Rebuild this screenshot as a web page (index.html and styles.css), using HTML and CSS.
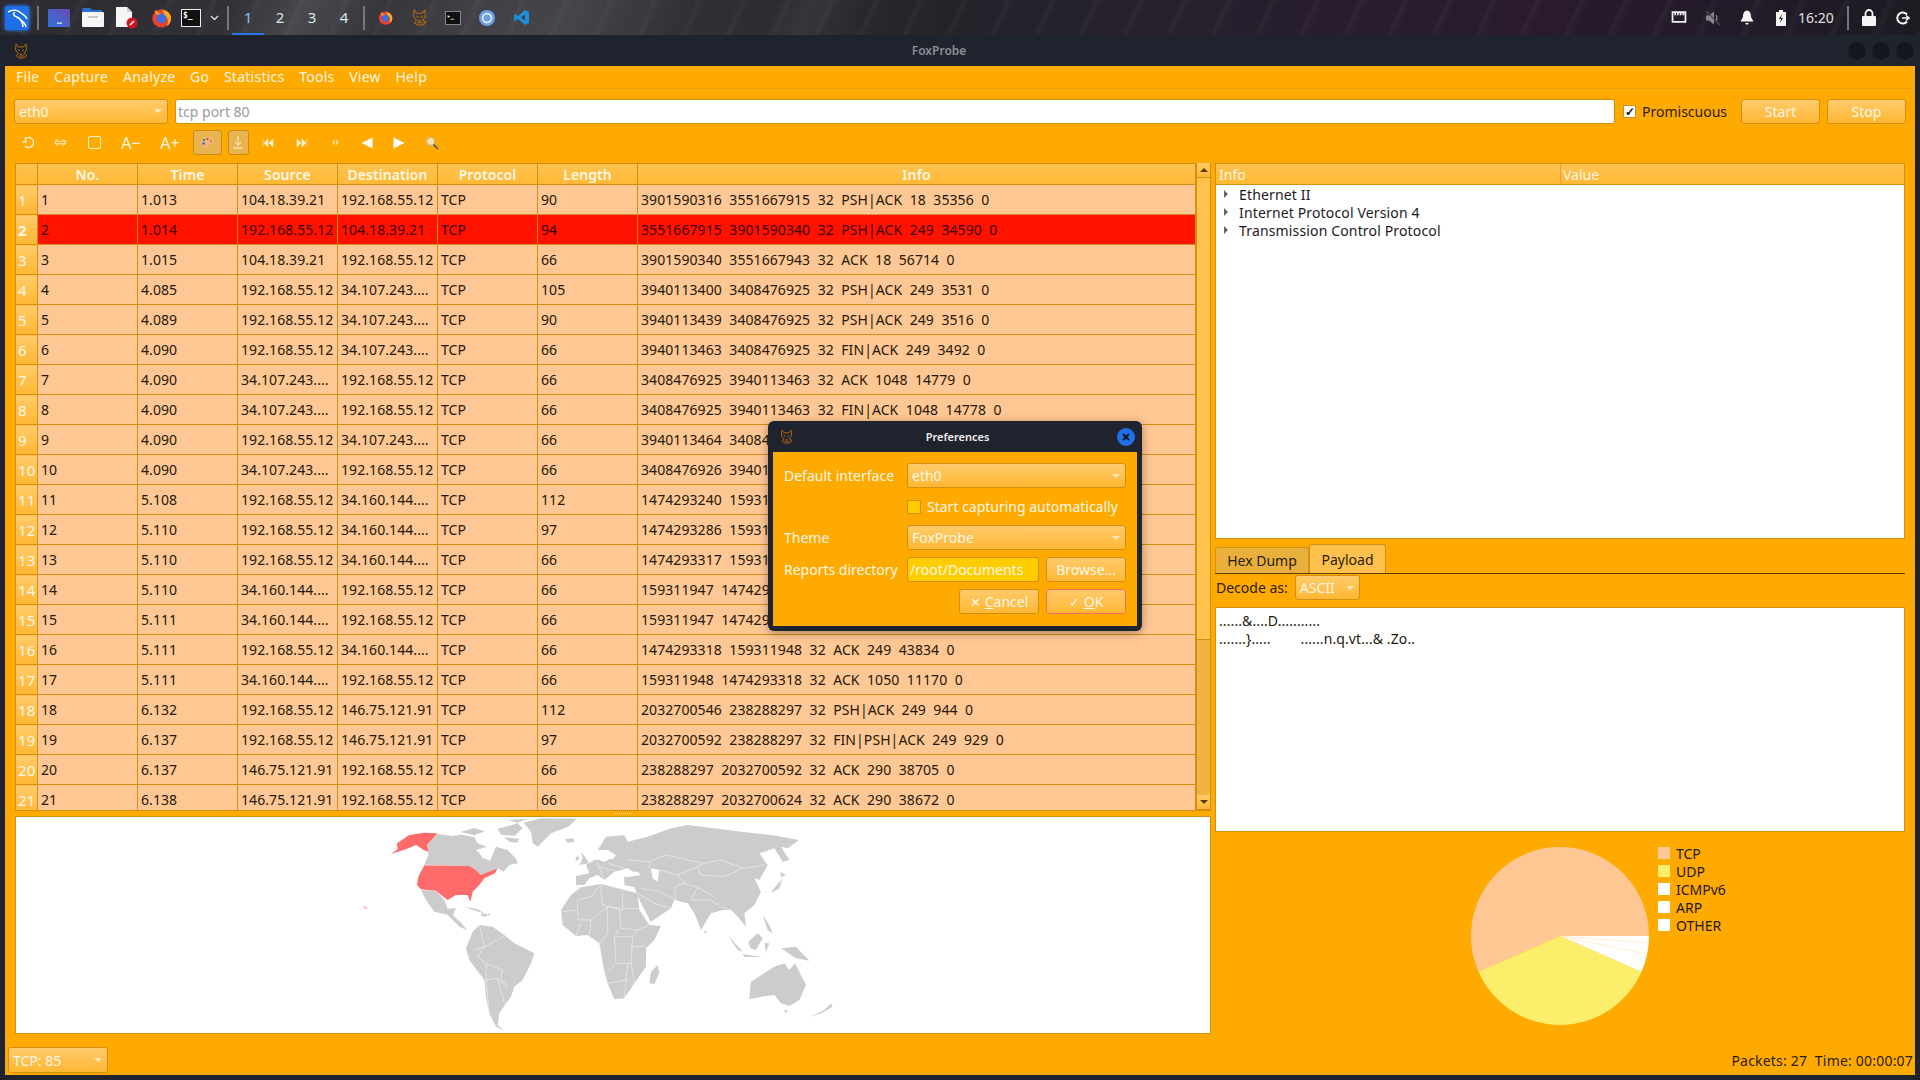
FILE: index.html
```html
<!DOCTYPE html>
<html lang="en">
<head>
    <meta charset="UTF-8">
    <title>FoxProbe</title>
    <link rel="stylesheet" href="styles.css">
</head>
<body>
    <svg class="defs" width="0" height="0">
        <symbol id="fox" viewBox="0 0 14 16">
            <path d="M2 1 L4.5 4 H9.5 L12 1 L12.5 7 L10 10.5 L13 12.5 L10 15 H5 L2.5 13 L4 10.5 L1.5 7 Z M4 6.5 L6 8 M10 6.5 L8 8 M5.5 10.5 L7 12 L8.5 10.5 M5 13 H10" fill="none" stroke="#b5690c" stroke-width="1"/>
        </symbol>
        <symbol id="firefox" viewBox="0 0 24 24">
            <circle cx="12" cy="13" r="10.5" fill="#e8412f"/>
            <path d="M12 3 C18 3 23 7 23 13 C23 17 21 20 18 22 C21 17 19 10 14 8 C15 6 14 4 12 3 Z" fill="#ffa61a"/>
            <path d="M5 3 C4 6 5 8 7 9 L12 7 C9 7 7 5 5 3 Z" fill="#ff9a26"/>
            <circle cx="12" cy="13" r="5.5" fill="#3a6fe0"/>
        </symbol>
    </svg>

    <div class="panel">
        <div class="p-cell">
            <svg class="kali" width="24" height="24" viewBox="0 0 24 24">
                <rect width="24" height="24" rx="2" fill="#1f6fe8"/>
                <path d="M3 6 C8 3 13 4 16 7 C19 9 21 10 22 13 M10 6 C7 8 9 10 12 11 C16 13 18 16 18 21 M15 14 C17 15 20 16 21 21" fill="none" stroke="#fff" stroke-width="1.5"/>
            </svg>
        </div>
        <div class="p-sep"></div>
        <div class="p-cell">
            <svg width="22" height="18" viewBox="0 0 22 18">
                <defs><linearGradient id="desk" x1="0" y1="1" x2="1" y2="0"><stop offset="0" stop-color="#2f72e0"/><stop offset="1" stop-color="#6a4bb0"/></linearGradient></defs>
                <rect width="22" height="18" rx="1" fill="url(#desk)"/>
                <rect x="9" y="13.5" width="5" height="1.4" fill="#dde"/>
            </svg>
        </div>
        <div class="p-cell">
            <svg width="22" height="19" viewBox="0 0 22 19">
                <path d="M0 2 Q0 0 2 0 H8 L10 2 H20 V6 H0 Z" fill="#2a6fd8"/>
                <rect y="4" width="22" height="15" rx="1" fill="#f6f6f6"/>
                <rect x="6" y="8" width="10" height="2" fill="#c9c9c9"/>
            </svg>
        </div>
        <div class="p-cell">
            <svg width="22" height="22" viewBox="0 0 22 22">
                <path d="M0 0 H11 L16 5 V20 H0 Z" fill="#f6f6f6"/>
                <path d="M11 0 L16 5 H11 Z" fill="#cfcfcf"/>
                <circle cx="16" cy="16" r="5.5" fill="#d01420"/>
                <path d="M14 18 L18 14" stroke="#fff" stroke-width="1.6"/>
            </svg>
        </div>
        <div class="p-cell"><svg width="21" height="21"><use href="#firefox"/></svg></div>
        <div class="p-cell cell-term">
            <div class="term">$_</div>
        </div>
        <div class="p-cell cell-chev">
            <svg width="9" height="6" viewBox="0 0 9 6"><path d="M1 1 L4.5 4.5 L8 1" fill="none" stroke="#ddd" stroke-width="1.4"/></svg>
        </div>
        <div class="p-sep"></div>
        <div class="ws ws-on">1</div>
        <div class="ws">2</div>
        <div class="ws">3</div>
        <div class="ws">4</div>
        <div class="p-sep"></div>
        <div class="p-cell"><svg width="15" height="15"><use href="#firefox"/></svg></div>
        <div class="p-cell"><svg width="15" height="17"><use href="#fox"/></svg></div>
        <div class="p-cell">
            <div class="term term-small">▸_</div>
        </div>
        <div class="p-cell">
            <svg width="16" height="16" viewBox="0 0 16 16"><circle cx="8" cy="8" r="8" fill="#6f9ee8"/><circle cx="8" cy="8" r="4.4" fill="none" stroke="#e4eefb" stroke-width="1.6"/></svg>
        </div>
        <div class="p-cell">
            <svg width="15" height="15" viewBox="0 0 15 15"><path d="M11 0 L15 2 V13 L11 15 L4 9 L1.5 11 L0 10 V5 L1.5 4 L4 6 Z M11 4.5 L7 7.5 L11 10.5 Z" fill="#1b8fd8" fill-rule="evenodd"/></svg>
        </div>
        <div class="tray">
            <div class="p-cell">
                <svg width="16" height="14" viewBox="0 0 14 13"><path d="M1 1 H13 V10 H1 Z M3.5 1 V4 M6 1 V4 M8.500 1 V4 M11 1 V4" fill="none" stroke="#f2f2f2" stroke-width="1.6"/></svg>
            </div>
            <div class="p-cell">
                <svg width="16" height="16" viewBox="0 0 16 16"><path d="M1 5.500 H4 L9 1.500 V14.500 L4 10.500 H1 Z" fill="#8a8790"/><path d="M11 5 Q13 8 11 11" fill="none" stroke="#8a8790" stroke-width="1.200"/><path d="M1 1 L15 15" stroke="#4d4a50" stroke-width="1.4"/></svg>
            </div>
            <div class="p-cell">
                <svg width="14" height="16" viewBox="0 0 14 16"><path d="M7 0.500 C10 1 11 3.500 11 7 L13.500 11.500 H0.500 L3 7 C3 3.500 4 1 7 0.500 Z M5 13 H9 L7 15 Z" fill="#f5f5f5"/></svg>
            </div>
            <div class="p-cell">
                <svg width="10" height="16" viewBox="0 0 10 16"><path d="M3 0 H7 V2 H10 V16 H0 V2 H3 Z" fill="#f5f5f5"/><path d="M6 4 L3 9 H5 L4 13 L7 8 H5 Z" fill="#222"/></svg>
            </div>
            <div class="clock">16:20</div>
            <div class="p-sep"></div>
            <div class="p-cell">
                <svg width="14" height="17" viewBox="0 0 14 17"><path d="M3.500 7 V4.500 A3.500 3.500 0 0 1 10.500 4.500 V7" fill="none" stroke="#f5f5f5" stroke-width="1.8"/><rect y="7" width="14" height="10" rx="1" fill="#f5f5f5"/></svg>
            </div>
            <div class="p-cell">
                <svg width="14" height="14" viewBox="0 0 14 14"><path d="M11 3.500 A5.500 5.500 0 1 0 11 10.500" fill="none" stroke="#f5f5f5" stroke-width="2"/><path d="M6 7 H13 M10 4.500 L13 7 L10 9.500" fill="none" stroke="#f5f5f5" stroke-width="1.600"/></svg>
            </div>
        </div>
    </div>

    <div class="window">
        <div class="titlebar">
            <svg class="title-icon" width="14" height="16"><use href="#fox"/></svg>
            <div class="title-text">FoxProbe</div>
            <div class="title-btns">
                <span class="dot"></span>
                <span class="dot"></span>
                <span class="dot"></span>
            </div>
        </div>

        <div class="app">
            <div class="menubar">
                <span>File</span>
                <span>Capture</span>
                <span>Analyze</span>
                <span>Go</span>
                <span>Statistics</span>
                <span>Tools</span>
                <span>View</span>
                <span>Help</span>
            </div>

            <div class="filterbar">
                <div class="combo combo-iface">eth0</div>
                <div class="filter-input">tcp port 80</div>
                <label class="promisc"><span class="check">✓</span>Promiscuous</label>
                <div class="btn btn-run">Start</div>
                <div class="btn btn-run">Stop</div>
            </div>

            <div class="toolbar">
                <div class="tool"><svg width="13" height="13" viewBox="0 0 13 13"><path d="M3 3 A5 5 0 1 1 3 10" fill="none" stroke="#fff3d6" stroke-width="1.300"/><path d="M0.500 6 H5 M3.500 1 V5" stroke="#fff3d6" stroke-width="1.300"/></svg></div>
                <div class="tool"><svg width="13" height="9" viewBox="0 0 13 9"><path d="M4 1 L1 4.500 L4 8 M9 1 L12 4.500 L9 8 M1 3.200 H12 M1 5.800 H12" fill="none" stroke="#fff3d6" stroke-width="1"/></svg></div>
                <div class="tool"><span class="tool-square"></span></div>
                <div class="tool tool-text">A−</div>
                <div class="tool tool-text">A+</div>
                <div class="tool">
                    <div class="tool-on tool-on-wide">
                        <svg width="15" height="13" viewBox="0 0 15 13"><path d="M7 0.500 C12 0.500 15 4 14 7 C13 9 10 7 9 9 C8 11 7 12.500 5 12 C1 11 0 8 1 5 C1.500 2.500 4 0.500 7 0.500 Z" fill="#f0b47c"/><circle cx="4" cy="4" r="1.200" fill="#3a8f4a"/><circle cx="7.500" cy="3" r="1.100" fill="#d8352a"/><circle cx="3.500" cy="7.500" r="1.200" fill="#3366cc"/><circle cx="11" cy="5" r="1" fill="#c63"/></svg>
                    </div>
                </div>
                <div class="tool">
                    <div class="tool-on">
                        <svg width="10" height="13" viewBox="0 0 10 13"><path d="M5 0 V9 M2 6 L5 9.500 L8 6 M0 12 H10" fill="none" stroke="#fff3d6" stroke-width="1"/></svg>
                    </div>
                </div>
                <div class="tool"><svg width="12" height="8" viewBox="0 0 12 8"><path d="M1 0 V8 M6 0 L2 4 L6 8 Z M11 0 L7 4 L11 8 Z" fill="#fff3d6" stroke="#fff3d6" stroke-width=".5"/></svg></div>
                <div class="tool"><svg width="12" height="8" viewBox="0 0 12 8"><path d="M11 0 V8 M1 0 L5 4 L1 8 Z M6 0 L10 4 L6 8 Z" fill="#fff3d6" stroke="#fff3d6" stroke-width=".5"/></svg></div>
                <div class="tool"><svg width="7" height="9" viewBox="0 0 7 9"><path d="M3.500 0 L7 4.500 L3.500 9 L0 4.500 Z" fill="#ffd277"/><path d="M3.500 0 V9" stroke="#ffaa00"/></svg></div>
                <div class="tool"><svg width="12" height="12" viewBox="0 0 12 12"><path d="M11.500 0.500 V11.500 L0.500 6 Z" fill="#fff"/></svg></div>
                <div class="tool"><svg width="12" height="12" viewBox="0 0 12 12"><path d="M0.500 0.500 V11.500 L11.500 6 Z" fill="#fff"/></svg></div>
                <div class="tool"><svg width="14" height="14" viewBox="0 0 14 14"><circle cx="5.500" cy="5.500" r="4" fill="#ffe0a8" stroke="#c9b68a" stroke-width="1.400"/><path d="M8.500 8.500 L13 13" stroke="#6f6a55" stroke-width="2"/></svg></div>
            </div>

            <div class="main">
                <div class="left">
                    <div class="packets">
                        <div class="table-wrap">
                            <table class="packet-table">
                                <thead>
                                    <tr><th class="corner"></th><th>No.</th><th>Time</th><th>Source</th><th>Destination</th><th>Protocol</th><th>Length</th><th>Info</th></tr>
                                </thead>
                                <tbody>
                                    <tr><th>1</th><td>1</td><td>1.013</td><td>104.18.39.21</td><td>192.168.55.12</td><td>TCP</td><td>90</td><td>3901590316  3551667915  32  PSH|ACK  18  35356  0</td></tr>
                                    <tr class="alert"><th>2</th><td>2</td><td>1.014</td><td>192.168.55.12</td><td>104.18.39.21</td><td>TCP</td><td>94</td><td>3551667915  3901590340  32  PSH|ACK  249  34590  0</td></tr>
                                    <tr><th>3</th><td>3</td><td>1.015</td><td>104.18.39.21</td><td>192.168.55.12</td><td>TCP</td><td>66</td><td>3901590340  3551667943  32  ACK  18  56714  0</td></tr>
                                    <tr><th>4</th><td>4</td><td>4.085</td><td>192.168.55.12</td><td>34.107.243....</td><td>TCP</td><td>105</td><td>3940113400  3408476925  32  PSH|ACK  249  3531  0</td></tr>
                                    <tr><th>5</th><td>5</td><td>4.089</td><td>192.168.55.12</td><td>34.107.243....</td><td>TCP</td><td>90</td><td>3940113439  3408476925  32  PSH|ACK  249  3516  0</td></tr>
                                    <tr><th>6</th><td>6</td><td>4.090</td><td>192.168.55.12</td><td>34.107.243....</td><td>TCP</td><td>66</td><td>3940113463  3408476925  32  FIN|ACK  249  3492  0</td></tr>
                                    <tr><th>7</th><td>7</td><td>4.090</td><td>34.107.243....</td><td>192.168.55.12</td><td>TCP</td><td>66</td><td>3408476925  3940113463  32  ACK  1048  14779  0</td></tr>
                                    <tr><th>8</th><td>8</td><td>4.090</td><td>34.107.243....</td><td>192.168.55.12</td><td>TCP</td><td>66</td><td>3408476925  3940113463  32  FIN|ACK  1048  14778  0</td></tr>
                                    <tr><th>9</th><td>9</td><td>4.090</td><td>192.168.55.12</td><td>34.107.243....</td><td>TCP</td><td>66</td><td>3940113464  34084</td></tr>
                                    <tr><th>10</th><td>10</td><td>4.090</td><td>34.107.243....</td><td>192.168.55.12</td><td>TCP</td><td>66</td><td>3408476926  39401</td></tr>
                                    <tr><th>11</th><td>11</td><td>5.108</td><td>192.168.55.12</td><td>34.160.144....</td><td>TCP</td><td>112</td><td>1474293240  159311</td></tr>
                                    <tr><th>12</th><td>12</td><td>5.110</td><td>192.168.55.12</td><td>34.160.144....</td><td>TCP</td><td>97</td><td>1474293286  159311</td></tr>
                                    <tr><th>13</th><td>13</td><td>5.110</td><td>192.168.55.12</td><td>34.160.144....</td><td>TCP</td><td>66</td><td>1474293317  159311</td></tr>
                                    <tr><th>14</th><td>14</td><td>5.110</td><td>34.160.144....</td><td>192.168.55.12</td><td>TCP</td><td>66</td><td>159311947  1474293</td></tr>
                                    <tr><th>15</th><td>15</td><td>5.111</td><td>34.160.144....</td><td>192.168.55.12</td><td>TCP</td><td>66</td><td>159311947  1474293</td></tr>
                                    <tr><th>16</th><td>16</td><td>5.111</td><td>192.168.55.12</td><td>34.160.144....</td><td>TCP</td><td>66</td><td>1474293318  159311948  32  ACK  249  43834  0</td></tr>
                                    <tr><th>17</th><td>17</td><td>5.111</td><td>34.160.144....</td><td>192.168.55.12</td><td>TCP</td><td>66</td><td>159311948  1474293318  32  ACK  1050  11170  0</td></tr>
                                    <tr><th>18</th><td>18</td><td>6.132</td><td>192.168.55.12</td><td>146.75.121.91</td><td>TCP</td><td>112</td><td>2032700546  238288297  32  PSH|ACK  249  944  0</td></tr>
                                    <tr><th>19</th><td>19</td><td>6.137</td><td>192.168.55.12</td><td>146.75.121.91</td><td>TCP</td><td>97</td><td>2032700592  238288297  32  FIN|PSH|ACK  249  929  0</td></tr>
                                    <tr><th>20</th><td>20</td><td>6.137</td><td>146.75.121.91</td><td>192.168.55.12</td><td>TCP</td><td>66</td><td>238288297  2032700592  32  ACK  290  38705  0</td></tr>
                                    <tr><th>21</th><td>21</td><td>6.138</td><td>146.75.121.91</td><td>192.168.55.12</td><td>TCP</td><td>66</td><td>238288297  2032700624  32  ACK  290  38672  0</td></tr>
                                </tbody>
                            </table>
                        </div>
                        <div class="scrollbar">
                            <div class="scroll-btn"><span class="arrow-up"></span></div>
                            <div class="scroll-thumb"></div>
                            <div class="scroll-track"></div>
                            <div class="scroll-btn"><span class="arrow-down"></span></div>
                        </div>
                    </div>
                    <div class="split"></div>
                    <div class="map">
                        <svg class="world" viewBox="15 817 1194 215" width="1194" height="215">
                            <g transform="translate(340 800) scale(.33333)">
                                <g class="land">
                                    <!-- america -->
                                    <path d="M290 102 L335 108 L362 104 L400 112 L410 130 L438 140 L405 150 L432 176 L447 182 L465 140 L500 150 L526 178 L530 190 L505 195 L487 215 L470 205 L440 218 L420 225 L405 210 L385 198 L250 194 L262 165 L258 135 Z"/>
                                    <path d="M358 96 L400 84 L432 94 L400 106 Z M470 86 L530 70 L545 85 L520 108 L480 104 Z M490 112 L535 116 L528 128 L505 125 Z M500 60 L560 56 L530 68 Z"/>
                                    <path d="M548 68 L600 55 L708 56 L682 80 L630 100 L590 140 L575 130 L570 95 Z"/>
                                    <path d="M672 118 L698 115 L700 125 L680 128 Z"/>
                                    <path d="M240 270 L285 272 L310 300 L320 326 L345 325 L335 345 L362 370 L378 390 L355 380 L320 345 L280 335 L255 300 Z"/>
                                    <path d="M370 320 L410 328 L430 340 L395 330 Z M420 340 L440 342 L436 350 L422 348 Z"/>
                                    <path d="M415 375 L455 380 L490 405 L520 430 L580 460 L570 490 L545 540 L520 560 L510 590 L495 610 L475 640 L470 675 L490 692 L465 680 L445 640 L435 590 L430 540 L385 480 L375 445 L395 395 Z"/>
                                    <!-- africa -->
                                    <path d="M720 262 L780 252 L850 270 L890 280 L895 330 L925 375 L960 378 L940 420 L915 445 L915 500 L880 550 L850 595 L820 598 L800 550 L790 515 L775 430 L740 405 L705 408 L665 375 L660 330 L690 285 Z"/>
                                    <path d="M950 495 L955 520 L940 552 L925 550 L930 515 Z"/>
                                    <!-- eurasia -->
                                    <path d="M705 255 L705 228 L745 220 L735 195 L765 178 L790 185 L820 170 L800 150 L770 150 L795 110 L850 105 L860 125 L920 110 L990 85 L1040 75 L1120 85 L1200 95 L1290 105 L1375 120 L1340 145 L1320 140 L1345 180 L1325 185 L1300 145 L1255 160 L1280 195 L1255 240 L1240 235 L1260 275 L1240 315 L1210 340 L1215 380 L1190 350 L1170 330 L1145 330 L1110 340 L1080 390 L1060 340 L1040 310 L1000 300 L990 325 L930 365 L900 310 L880 262 L850 255 L850 230 L890 225 L860 205 L820 215 L790 240 L770 225 L745 235 L730 255 Z"/>
                                    <path d="M720 155 L735 175 L745 190 L715 195 L725 175 Z M705 170 L715 170 L712 182 L703 180 Z"/>
                                    <path d="M1295 270 L1325 235 L1315 265 L1290 280 Z M1318 215 L1335 225 L1320 232 Z"/>
                                    <path d="M1160 405 L1205 455 L1190 450 Z M1222 425 L1250 400 L1265 415 L1245 450 L1228 445 Z M1205 462 L1265 472 L1210 470 Z M1270 430 L1285 430 L1275 455 Z M1320 445 L1365 440 L1405 482 L1365 475 Z M1265 345 L1285 375 L1295 400 L1280 390 Z M1090 390 L1098 398 L1092 402 Z"/>
                                    <!-- oceania -->
                                    <path d="M1230 545 L1300 500 L1330 490 L1345 510 L1362 490 L1395 555 L1375 600 L1345 618 L1320 610 L1300 585 L1260 590 L1225 598 L1228 560 Z"/>
                                    <path d="M1328 630 L1340 630 L1335 640 Z M1405 652 L1450 630 L1470 610 L1475 620 L1440 640 Z"/>
                                </g>
                                <path class="water" d="M930 205 L955 210 L950 245 L935 235 Z M855 232 L900 225 L890 215 L860 215 Z M410 150 L440 145 L445 178 L425 175 Z M800 150 L825 165 L815 178 L795 175 Z"/>
                                <g class="usa">
                                    <path d="M150 162 L170 148 L168 130 L205 105 L250 98 L290 100 L258 135 L262 155 L248 150 L225 135 L195 148 Z"/>
                                    <path d="M250 196 L385 198 L405 210 L420 225 L470 205 L462 220 L430 235 L415 255 L395 275 L388 305 L380 285 L345 285 L320 300 L300 285 L285 272 L240 268 L228 255 L232 230 Z"/>
                                    <path d="M65 316 L72 320 L80 328 L74 326 Z M438 342 L446 342 L445 346 Z"/>
                                </g>
                                <path class="borders" d="M662 335 L710 330 L710 300 L750 290 L778 255 M778 255 L785 315 L845 330 L845 272 M845 325 L895 325 M710 330 L712 360 L750 360 L800 320 L835 325 L840 385 L890 390 L925 375 M705 408 L720 370 M750 360 L745 405 M800 320 L800 400 L775 430 M835 385 L820 410 L875 410 L890 390 M820 410 L825 490 L800 515 M875 410 L870 490 L825 490 M915 440 L870 440 M870 490 L880 550 M800 550 L860 540 M860 490 L850 595"/>
                                <path class="borders" d="M415 375 L430 440 L400 450 M430 440 L470 420 L490 405 M430 440 L410 470 L435 490 L485 510 L480 535 L500 560 M435 490 L435 540 L470 535 L500 565 M435 540 L445 640 M470 535 L490 610"/>
                                <path class="borders" d="M855 180 L925 185 L975 165 L1040 180 L1090 190 L1135 180 L1210 205 L1270 195 M925 185 L925 205 M955 210 L1010 225 L1070 200 L1090 190 M1070 200 L1080 225 L1150 230 L1205 205 M1010 225 L1030 250 L1000 262 L1005 300 M1030 250 L1070 262 L1050 300 L1110 300 L1135 320 L1170 330 M1170 330 L1190 350 M1070 262 L1120 290 M900 265 L955 275 L1005 300 M890 280 L940 310 L990 325 M765 178 L790 240 M800 190 L850 205 M770 200 L830 215"/>
                            </g>
                        </svg>
                    </div>
                </div>

                <div class="right">
                    <div class="tree">
                        <div class="tree-head">
                            <div class="tree-col1">Info</div>
                            <div>Value</div>
                        </div>
                        <div class="tree-body">
                            <div class="tree-row"><span class="tree-arrow"></span>Ethernet II</div>
                            <div class="tree-row"><span class="tree-arrow"></span>Internet Protocol Version 4</div>
                            <div class="tree-row"><span class="tree-arrow"></span>Transmission Control Protocol</div>
                        </div>
                    </div>
                    <div class="tabs">
                        <div class="tab">Hex Dump</div>
                        <div class="tab tab-on">Payload</div>
                    </div>
                    <div class="decode">
                        <span>Decode as:</span>
                        <div class="combo combo-decode">ASCII</div>
                    </div>
                    <div class="payload">
                        <div class="payload-line">......&amp;....D...........</div>
                        <div class="payload-line">.......}.....        ......n.q.vt...&amp; .Zo..</div>
                    </div>
                    <div class="chart">
                        <svg class="pie" width="178" height="178" viewBox="0 0 178 178">
                            <path d="M89 89 L178 89 A89 89 0 1 0 7.500 124.700 Z" fill="#ffc793"/>
                            <path d="M89 89 L7.500 124.700 A89 89 0 0 0 170.500 124.700 Z" fill="#fbee6b"/>
                            <path d="M89 89 L170.500 124.700 A89 89 0 0 0 178 89 Z" fill="#fff"/>
                            <path d="M89 89 L177.500 96 M89 89 L175.500 107" stroke="#ffe9c4" stroke-width=".8"/>
                        </svg>
                        <div class="legend">
                            <div class="legend-row"><span class="swatch swatch-tcp"></span>TCP</div>
                            <div class="legend-row"><span class="swatch swatch-udp"></span>UDP</div>
                            <div class="legend-row"><span class="swatch"></span>ICMPv6</div>
                            <div class="legend-row"><span class="swatch"></span>ARP</div>
                            <div class="legend-row"><span class="swatch"></span>OTHER</div>
                        </div>
                    </div>
                </div>
            </div>

            <div class="statusbar">
                <div class="combo combo-status">TCP: 85</div>
                <div class="status-text">Packets: 27&nbsp; Time: 00:00:07</div>
            </div>
        </div>
    </div>

    <div class="dialog">
        <div class="dialog-title">
            <svg class="dialog-fox" width="13" height="15"><use href="#fox"/></svg>
            <span class="dialog-name">Preferences</span>
            <span class="dialog-close">
                <svg width="8" height="8" viewBox="0 0 8 8"><path d="M1 1 L7 7 M7 1 L1 7" stroke="#10131c" stroke-width="1.800"/></svg>
            </span>
        </div>
        <div class="dialog-body">
            <span class="d-label">Default interface</span>
            <div class="combo">eth0</div>
            <span></span>
            <label class="d-check"><span class="check check-off"></span>Start capturing automatically</label>
            <span class="d-label">Theme</span>
            <div class="combo">FoxProbe</div>
            <span class="d-label d-label-end">Reports directory</span>
            <div class="d-path">
                <div class="path-input">/root/Documents</div>
                <div class="btn btn-browse">Browse…</div>
            </div>
            <span></span>
            <div class="d-actions">
                <div class="btn btn-dialog"><span class="btn-icon">✕</span><span><u>C</u>ancel</span></div>
                <div class="btn btn-dialog btn-default"><span class="btn-icon">✓</span><span><u>O</u>K</span></div>
            </div>
        </div>
    </div>
</body>
</html>
```

FILE: styles.css
```css
html, body {
    margin: 0;
    padding: 0;
    height: 100%;
}

body {
    width: 1920px;
    height: 1080px;
    overflow: hidden;
    position: relative;
    display: flex;
    flex-direction: column;
    font-family: "Noto Sans", sans-serif;
    font-size: 14px;
    color: #2a1c00;
    background-color: #1f232e;
}

.defs {
    position: absolute;
}

/* desktop panel */

.panel {
    height: 35px;
    flex: none;
    display: flex;
    align-items: center;
    color: #e6e6e6;
    background:
        linear-gradient(115deg, transparent 40%, rgba(255, 255, 255, .05) 42%, transparent 45%),
        linear-gradient(115deg, transparent 12%, rgba(255, 255, 255, .1) 16%, transparent 20%, rgba(255, 255, 255, .08) 30%, transparent 36%),
        repeating-linear-gradient(115deg, transparent 0, transparent 30px, rgba(255, 255, 255, .035) 34px, transparent 40px),
        linear-gradient(90deg, #2b2a30 0%, #3a393f 25%, #24232a 50%, #2a1a30 80%, #1c1b22 100%);
}

.p-cell {
    width: 34px;
    height: 34px;
    flex: none;
    display: flex;
    align-items: center;
    justify-content: center;
}

.cell-term {
    width: 26px;
}

.cell-chev {
    width: 20px;
}

.kali {
    filter: drop-shadow(0 0 2px #2f86ff);
}

.p-sep {
    width: 2px;
    height: 24px;
    margin: 0 3px;
    flex: none;
    background-color: #77767c;
}

.term {
    width: 20px;
    height: 18px;
    border: 1px solid #eee;
    background-color: #111;
    color: #fff;
    font-family: "DejaVu Sans Mono", monospace;
    font-size: 8px;
    font-weight: bold;
    line-height: 11px;
    padding-left: 1px;
    box-sizing: border-box;
}

.term-small {
    width: 16px;
    height: 14px;
    border-color: #888;
    font-size: 6px;
    line-height: 8px;
}

.ws {
    width: 32px;
    height: 34px;
    box-sizing: border-box;
    flex: none;
    text-align: center;
    font-size: 15px;
    line-height: 32px;
    color: #dbe6f2;
}

.ws-on {
    border-bottom: 2px solid #2b78e4;
    color: #8fc0f0;
}

.tray {
    margin-left: auto;
    display: flex;
    align-items: center;
}

.clock {
    width: 46px;
    font-size: 14px;
    color: #e0e0e0;
}

/* window */

.window {
    flex: 1;
    display: flex;
    flex-direction: column;
    padding: 0 5px 5px;
    background-color: #1f232e;
    border-radius: 6px 6px 0 0;
    min-height: 0;
}

.titlebar {
    height: 31px;
    flex: none;
    display: flex;
    align-items: center;
    position: relative;
}

.title-icon {
    margin-left: 9px;
}

.title-text {
    flex: 1;
    text-align: center;
    font-size: 12px;
    font-weight: 600;
    color: #8b8e96;
    padding-right: 90px;
    padding-left: 92px;
}

.title-btns {
    display: flex;
    gap: 6px;
    margin-right: 1px;
}

.dot {
    width: 18px;
    height: 18px;
    border-radius: 50%;
    background-color: #14171f;
}

.app {
    flex: 1;
    min-height: 0;
    display: flex;
    flex-direction: column;
    background-color: #ffaa00;
}

.menubar {
    height: 22px;
    box-sizing: content-box;
    flex: none;
    display: flex;
    gap: 14.7px;
    align-items: flex-start;
    line-height: 21px;
    padding-left: 11px;
    letter-spacing: .25px;
    border-bottom: 1px solid #e8a00c;
    color: #fff6e2;
}

.filterbar {
    height: 26px;
    flex: none;
    margin-top: 9px;
    padding: 0 10px 0 9px;
    display: flex;
    align-items: center;
}

.combo {
    height: 25px;
    box-sizing: border-box;
    display: flex;
    align-items: center;
    padding-left: 4px;
    color: #fff8e8;
    border: 1px solid #d28f12;
    border-radius: 3px;
    background: linear-gradient(#ffcb6b, #ffb733);
}

.combo::after {
    content: "";
    margin-left: auto;
    margin-right: 5px;
    border-left: 4px solid transparent;
    border-right: 4px solid transparent;
    border-top: 4px solid #ffe8bb;
}

.combo-iface {
    width: 154px;
    flex: none;
}

.filter-input {
    width: 1440px;
    height: 25px;
    box-sizing: border-box;
    flex: none;
    margin-left: 7px;
    padding-left: 2px;
    line-height: 23px;
    color: #9a9a9a;
    background-color: #fff;
    border: 1px solid #d28f12;
    border-radius: 3px;
}

.promisc {
    width: 118px;
    flex: none;
    display: flex;
    align-items: center;
    margin-left: 8px;
    color: #2a1c00;
}

.check {
    width: 13px;
    height: 13px;
    flex: none;
    margin-right: 6px;
    box-sizing: border-box;
    border: 1px solid #d28f12;
    background-color: #fff;
    color: #111;
    font-size: 12px;
    font-weight: bold;
    line-height: 11px;
    text-align: center;
}

.check-off {
    width: 14px;
    height: 14px;
    background-color: #ffcc00;
}

.btn {
    height: 25px;
    box-sizing: border-box;
    display: flex;
    align-items: center;
    justify-content: center;
    flex: none;
    color: #fff8e8;
    border: 1px solid #d28f12;
    border-radius: 3px;
    background: linear-gradient(#ffcb6b, #ffb733);
}

.btn-run {
    width: 79px;
    margin-right: 7px;
}

.btn-run:last-child {
    margin-right: 0;
}

.toolbar {
    height: 25px;
    flex: none;
    margin-top: 6px;
    padding-left: 7px;
    display: grid;
    grid-template-columns: 32px 32px 36px 38px 40px 35px 26px 34px 34px 32px 31px 33px 34px;
}

.tool {
    display: flex;
    align-items: center;
    justify-content: center;
}

.tool-text {
    font-size: 16px;
    color: #fff6e2;
}

.tool-square {
    width: 11px;
    height: 11px;
    border: 1px solid #fff3d6;
    border-radius: 2px;
}

.tool-on {
    width: 21px;
    height: 25px;
    box-sizing: border-box;
    display: flex;
    align-items: center;
    justify-content: center;
    border: 1px solid #c98a18;
    border-radius: 3px;
    background-color: #e9b34d;
}

.tool-on-wide {
    width: 29px;
}

/* main area */

.main {
    height: 871px;
    flex: none;
    margin-top: 8px;
    padding: 0 10px;
    display: grid;
    grid-template-columns: 1196px 690px;
    column-gap: 4px;
}

.left {
    display: flex;
    flex-direction: column;
    min-height: 0;
}

.packets {
    height: 648px;
    flex: none;
    display: flex;
    border-right: 1px solid #d28f12;
    border-bottom: 1px solid #d28f12;
    box-sizing: border-box;
    overflow: hidden;
}

.table-wrap {
    width: 1181px;
    flex: none;
    overflow: hidden;
}

.packet-table {
    width: 1181px;
    table-layout: fixed;
    border-collapse: collapse;
}

.packet-table th,
.packet-table td {
    height: 30px;
    box-sizing: border-box;
    padding: 0 3px;
    border: 1px solid #d28f12;
    font-weight: normal;
    white-space: pre;
    overflow: hidden;
    text-align: left;
    letter-spacing: .08px;
}

.packet-table td {
    background-color: #ffc793;
    color: #241808;
}

.packet-table thead th {
    height: 21px;
    padding: 0;
    text-align: center;
    font-weight: 600;
    color: #fff8e8;
    background: linear-gradient(#ffc34f, #ffb835);
}

.packet-table thead .corner {
    width: 22px;
}

.packet-table thead th:nth-child(n+2):nth-child(-n+7) {
    width: 100px;
}

.packet-table tbody th {
    font-size: 15px;
    padding: 0 2px;
    color: #fff8e8;
    background: linear-gradient(#ffcb6b, #ffb733);
}

.packet-table .alert td {
    background-color: #ff1200;
    color: #3a0500;
}

.packet-table .alert th {
    font-weight: bold;
}

.scrollbar {
    width: 14px;
    flex: none;
    display: flex;
    flex-direction: column;
    border-left: 1px solid #d28f12;
}

.scroll-btn {
    height: 15px;
    flex: none;
    display: flex;
    align-items: center;
    justify-content: center;
    background: linear-gradient(#ffcb6b, #ffb733);
    border-bottom: 1px solid #d28f12;
    box-sizing: border-box;
}

.arrow-up {
    border-left: 4px solid transparent;
    border-right: 4px solid transparent;
    border-bottom: 4px solid #5a3c00;
}

.arrow-down {
    border-left: 4px solid transparent;
    border-right: 4px solid transparent;
    border-top: 4px solid #5a3c00;
}

.scroll-thumb {
    height: 462px;
    flex: none;
    background-color: #ffc24d;
    border-bottom: 1px solid #d28f12;
    box-sizing: border-box;
}

.scroll-track {
    flex: 1;
    background-color: #f2b440;
}

.split {
    height: 5px;
    flex: none;
    position: relative;
}

.split::before {
    content: "";
    position: absolute;
    left: 600px;
    top: 2px;
    width: 17px;
    border-top: 1px dotted #ffe8bb;
}

.map {
    flex: 1;
    min-height: 0;
    background-color: #fff;
    border: 1px solid #d28f12;
    overflow: hidden;
}

.world {
    display: block;
}

.land path {
    fill: #cccccc;
}

.water {
    fill: #fff;
}

.usa path {
    fill: #ff6b6b;
}

.borders {
    fill: none;
    stroke: #eeeeee;
    stroke-width: 2;
}

/* right side */

.right {
    display: flex;
    flex-direction: column;
    min-height: 0;
}

.tree {
    height: 376px;
    flex: none;
    box-sizing: border-box;
    display: flex;
    flex-direction: column;
    background-color: #fff;
    border: 1px solid #d28f12;
}

.tree-head {
    height: 21px;
    box-sizing: border-box;
    flex: none;
    display: flex;
    align-items: center;
    padding-left: 3px;
    color: #fff8e8;
    border-bottom: 1px solid #d28f12;
    background: linear-gradient(#ffc34f, #ffb835);
}

.tree-col1 {
    width: 341px;
    margin-right: 2px;
    height: 100%;
    line-height: 21px;
    border-right: 1px solid #e9a532;
}

.tree-row {
    height: 18px;
    display: flex;
    align-items: center;
    color: #1b1a1e;
    padding-left: 8px;
    letter-spacing: .15px;
}

.tree-arrow {
    width: 0;
    height: 0;
    margin-right: 11px;
    border-top: 4px solid transparent;
    border-bottom: 4px solid transparent;
    border-left: 4px solid #666;
}

.tabs {
    height: 29px;
    flex: none;
    margin-top: 5px;
    display: flex;
    align-items: flex-end;
    border-bottom: 1px solid #5c3d00;
}

.tab {
    height: 26px;
    box-sizing: border-box;
    padding: 0 8px;
    width: 94px;
    text-align: center;
    line-height: 25px;
    color: #2a1c00;
    background-color: #e9b03d;
    border: 1px solid #d28f12;
    border-bottom: none;
    border-radius: 3px 3px 0 0;
}

.tab-on {
    width: 77px;
    height: 29px;
    line-height: 29px;
    background-color: #ffc14d;
}

.decode {
    height: 25px;
    flex: none;
    margin-top: 1px;
    display: flex;
    align-items: center;
    gap: 7px;
    padding-left: 1px;
}

.combo-decode {
    width: 65px;
    flex: none;
}

.payload {
    height: 225px;
    flex: none;
    margin-top: 7px;
    box-sizing: border-box;
    padding: 4px 3px;
    background-color: #fff;
    border: 1px solid #d28f12;
    line-height: 18px;
    color: #241808;
    letter-spacing: .1px;
}

.payload-line {
    white-space: pre;
}

.chart {
    flex: 1;
    display: flex;
    align-items: flex-start;
    padding: 15px 0 0 256px;
}

.pie {
    flex: none;
}

.legend {
    margin: -3px 0 0 9px;
}

.legend-row {
    height: 18px;
    display: flex;
    align-items: center;
    color: #241808;
}

.swatch {
    width: 12px;
    height: 12px;
    margin-right: 6px;
    background-color: #fff;
}

.swatch-tcp {
    background-color: #ffc793;
}

.swatch-udp {
    background-color: #fbee6b;
}

/* status bar */

.statusbar {
    flex: 1;
    display: flex;
    align-items: center;
    padding: 13px 2px 2px;
    justify-content: space-between;
}

.combo-status {
    width: 100px;
    height: 26px;
    margin-left: 1px;
}

.status-text {
    color: #2a1c00;
    white-space: pre;
    letter-spacing: .2px;
}

/* preferences dialog */

.dialog {
    position: absolute;
    left: 768px;
    top: 421px;
    width: 374px;
    height: 210px;
    box-sizing: border-box;
    padding: 0 5px 5px;
    display: flex;
    flex-direction: column;
    background-color: #1f232e;
    border-radius: 6px;
    box-shadow: 0 2px 10px rgba(0, 0, 0, .35);
}

.dialog-title {
    height: 31px;
    flex: none;
    display: flex;
    align-items: center;
    position: relative;
}

.dialog-fox {
    margin-left: 7px;
}

.dialog-name {
    flex: 1;
    text-align: center;
    font-size: 11px;
    font-weight: 600;
    color: #f0f0f0;
    padding-left: 5px;
}

.dialog-close {
    width: 18px;
    height: 18px;
    margin-right: 2px;
    display: flex;
    align-items: center;
    justify-content: center;
    border-radius: 50%;
    background-color: #1f6fe8;
}

.dialog-body {
    flex: 1;
    display: grid;
    grid-template-columns: 123px 219px;
    grid-template-rows: 25px 25px 25px 26px 26px;
    row-gap: 6px;
    padding: 11px 11px 0;
    background-color: #ffaa00;
    color: #fff8e8;
}

.d-label {
    align-self: center;
    color: #fff8e8;
}

.d-label-end {
    align-self: end;
    line-height: 24px;
}

.d-check {
    display: flex;
    align-items: center;
}

.d-path {
    display: flex;
    justify-content: space-between;
    align-items: flex-end;
}

.path-input {
    width: 132px;
    height: 25px;
    box-sizing: border-box;
    padding-left: 2px;
    line-height: 23px;
    color: #fff8e8;
    background-color: #ffcc00;
    border: 1px solid #d28f12;
    border-radius: 3px;
}

.btn-browse {
    width: 80px;
}

.d-actions {
    display: flex;
    justify-content: flex-end;
    align-items: flex-end;
    gap: 7px;
}

.btn-dialog {
    width: 80px;
    gap: 4px;
}

.btn-icon {
    font-size: 13px;
}

.btn-default {
    border-color: #ff6a5a;
}
```
